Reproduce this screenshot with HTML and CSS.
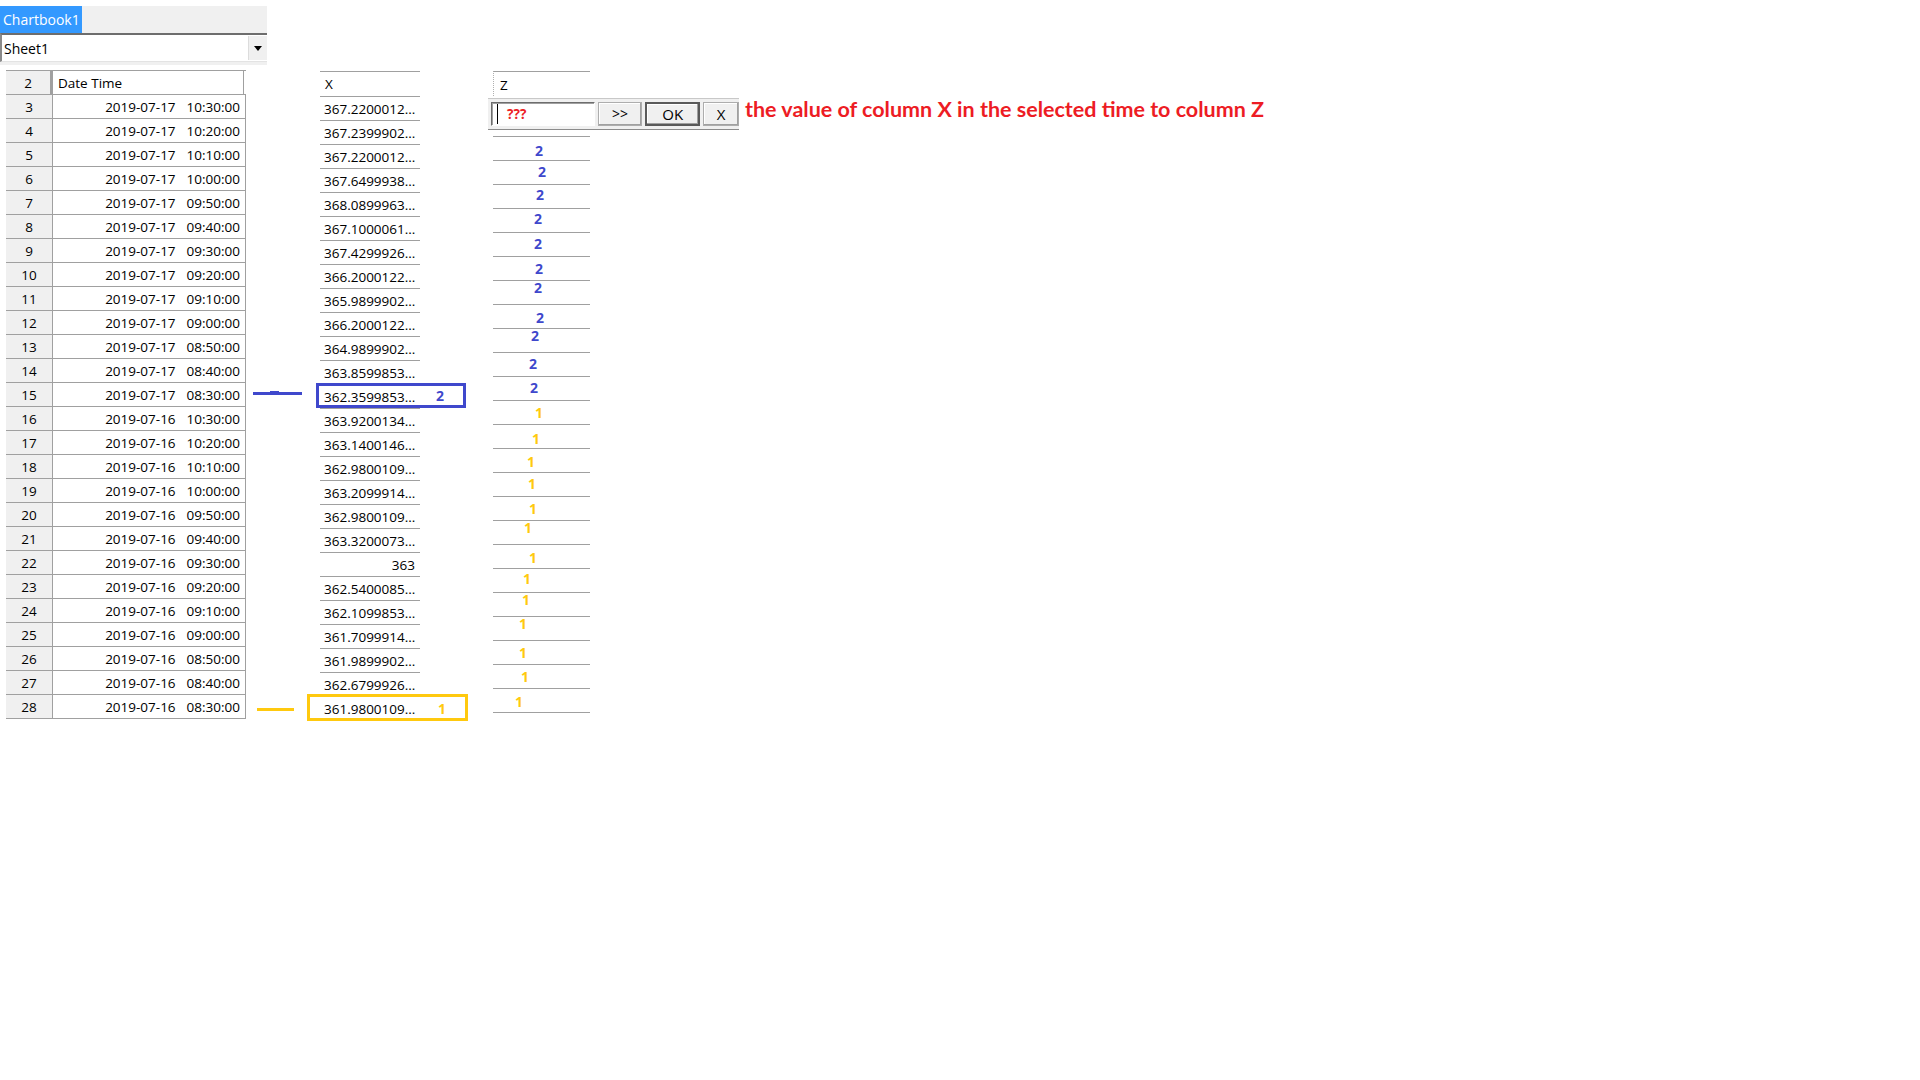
FILE: index.html
```html
<!DOCTYPE html>
<html lang="en">
    <head>
        <meta charset="UTF-8" />
        <title>Chartbook1</title>
        <link rel="stylesheet" href="styles.css">
    </head>

    <body>
        <div class="top">
            <div class="tabs"><div class="tab">Chartbook1</div></div>
            <div class="sheet-select">
                <span>Sheet1</span>
                <div class="drop"><div class="arrow"></div></div>
            </div>
            <div class="strip"></div>
        </div>

        <div class="sheet">
            <div class="grid">
                <div class="row head"><div class="rn">2</div><div class="dt left">Date Time</div></div>
                <div class="row"><div class="rn">3</div><div class="dt">2019-07-17  10:30:00</div></div>
                <div class="row"><div class="rn">4</div><div class="dt">2019-07-17  10:20:00</div></div>
                <div class="row"><div class="rn">5</div><div class="dt">2019-07-17  10:10:00</div></div>
                <div class="row"><div class="rn">6</div><div class="dt">2019-07-17  10:00:00</div></div>
                <div class="row"><div class="rn">7</div><div class="dt">2019-07-17  09:50:00</div></div>
                <div class="row"><div class="rn">8</div><div class="dt">2019-07-17  09:40:00</div></div>
                <div class="row"><div class="rn">9</div><div class="dt">2019-07-17  09:30:00</div></div>
                <div class="row"><div class="rn">10</div><div class="dt">2019-07-17  09:20:00</div></div>
                <div class="row"><div class="rn">11</div><div class="dt">2019-07-17  09:10:00</div></div>
                <div class="row"><div class="rn">12</div><div class="dt">2019-07-17  09:00:00</div></div>
                <div class="row"><div class="rn">13</div><div class="dt">2019-07-17  08:50:00</div></div>
                <div class="row"><div class="rn">14</div><div class="dt">2019-07-17  08:40:00</div></div>
                <div class="row"><div class="rn">15</div><div class="dt">2019-07-17  08:30:00</div></div>
                <div class="row"><div class="rn">16</div><div class="dt">2019-07-16  10:30:00</div></div>
                <div class="row"><div class="rn">17</div><div class="dt">2019-07-16  10:20:00</div></div>
                <div class="row"><div class="rn">18</div><div class="dt">2019-07-16  10:10:00</div></div>
                <div class="row"><div class="rn">19</div><div class="dt">2019-07-16  10:00:00</div></div>
                <div class="row"><div class="rn">20</div><div class="dt">2019-07-16  09:50:00</div></div>
                <div class="row"><div class="rn">21</div><div class="dt">2019-07-16  09:40:00</div></div>
                <div class="row"><div class="rn">22</div><div class="dt">2019-07-16  09:30:00</div></div>
                <div class="row"><div class="rn">23</div><div class="dt">2019-07-16  09:20:00</div></div>
                <div class="row"><div class="rn">24</div><div class="dt">2019-07-16  09:10:00</div></div>
                <div class="row"><div class="rn">25</div><div class="dt">2019-07-16  09:00:00</div></div>
                <div class="row"><div class="rn">26</div><div class="dt">2019-07-16  08:50:00</div></div>
                <div class="row"><div class="rn">27</div><div class="dt">2019-07-16  08:40:00</div></div>
                <div class="row"><div class="rn">28</div><div class="dt">2019-07-16  08:30:00</div></div>
            </div>

            <div class="xcol">
                <div class="xhead">X</div>
                <div class="xcell">367.2200012...</div>
                <div class="xcell">367.2399902...</div>
                <div class="xcell">367.2200012...</div>
                <div class="xcell">367.6499938...</div>
                <div class="xcell">368.0899963...</div>
                <div class="xcell">367.1000061...</div>
                <div class="xcell">367.4299926...</div>
                <div class="xcell">366.2000122...</div>
                <div class="xcell">365.9899902...</div>
                <div class="xcell">366.2000122...</div>
                <div class="xcell">364.9899902...</div>
                <div class="xcell">363.8599853...</div>
                <div class="xcell">362.3599853...</div>
                <div class="xcell">363.9200134...</div>
                <div class="xcell">363.1400146...</div>
                <div class="xcell">362.9800109...</div>
                <div class="xcell">363.2099914...</div>
                <div class="xcell">362.9800109...</div>
                <div class="xcell">363.3200073...</div>
                <div class="xcell num">363</div>
                <div class="xcell">362.5400085...</div>
                <div class="xcell">362.1099853...</div>
                <div class="xcell">361.7099914...</div>
                <div class="xcell">361.9899902...</div>
                <div class="xcell">362.6799926...</div>
                <div class="xcell">361.9800109...</div>
            </div>

            <div class="zcol">
                <div class="zhead">Z</div>
                <div class="prompt-row">
                    <div class="prompt">
                        <div class="input"><span class="caret"></span>???</div>
                        <div class="btn">&gt;&gt;</div>
                        <div class="btn ok">OK</div>
                        <div class="btn close">X</div>
                    </div>
                    <div class="note">the value of column X in the selected time to column Z</div>
                </div>
                <!-- hand-written marks, each one placed where it was drawn -->
                <div class="zcells">
                    <div class="zcell two" style="padding:7px 0 0 42px">2</div>
                    <div class="zcell two" style="padding:4px 0 0 45px">2</div>
                    <div class="zcell two" style="padding:3px 0 0 43px">2</div>
                    <div class="zcell two" style="padding:3px 0 0 41px">2</div>
                    <div class="zcell two" style="padding:4px 0 0 41px">2</div>
                    <div class="zcell two" style="padding:5px 0 0 42px">2</div>
                    <div class="zcell two" style="padding:0 0 0 41px">2</div>
                    <div class="zcell two" style="padding:6px 0 0 43px">2</div>
                    <div class="zcell two" style="padding:0 0 0 38px">2</div>
                    <div class="zcell two" style="padding:4px 0 0 36px">2</div>
                    <div class="zcell two" style="padding:4px 0 0 37px">2</div>
                    <div class="zcell one" style="padding:5px 0 0 42px">1</div>
                    <div class="zcell one" style="padding:7px 0 0 39px">1</div>
                    <div class="zcell one" style="padding:6px 0 0 34px">1</div>
                    <div class="zcell one" style="padding:4px 0 0 35px">1</div>
                    <div class="zcell one" style="padding:5px 0 0 36px">1</div>
                    <div class="zcell one" style="padding:0 0 0 31px">1</div>
                    <div class="zcell one" style="padding:6px 0 0 36px">1</div>
                    <div class="zcell one" style="padding:3px 0 0 30px">1</div>
                    <div class="zcell one" style="padding:0 0 0 29px">1</div>
                    <div class="zcell one" style="padding:0 0 0 26px">1</div>
                    <div class="zcell one" style="padding:5px 0 0 26px">1</div>
                    <div class="zcell one" style="padding:5px 0 0 28px">1</div>
                    <div class="zcell one" style="padding:6px 0 0 22px">1</div>
                </div>
            </div>

            <div class="mark blue-line"></div>
            <div class="mark blue-dot"></div>
            <div class="mark blue-box"><span>2</span></div>
            <div class="mark gold-line"></div>
            <div class="mark gold-box"><span>1</span></div>
        </div>
    </body>
</html>
```

FILE: styles.css
```css
@charset "utf-8";

* {
    margin: 0;
    padding: 0;
    box-sizing: border-box;
}

body {
    font-family: "Open Sans", "Noto Sans", sans-serif;
    font-size: 13.5px;
    color: #000;
    background: #fff;
    padding-top: 6px;
}

/* workbook header */
.top {
    width: 267px;
}

.tabs {
    height: 27px;
    background: #f0f0f0;
}

.tab {
    width: 82px;
    height: 27px;
    background: #3399ff;
    color: #fff;
    font-size: 14px;
    line-height: 27px;
    padding-left: 3px;
}

.sheet-select {
    display: flex;
    align-items: center;
    justify-content: space-between;
    height: 29px;
    border-top: 2px solid #6d6d6d;
    border-left: 2px solid #8a8a8a;
    border-bottom: 1px solid #e3e3e3;
    font-size: 14px;
    padding-left: 2px;
}

.drop {
    width: 19px;
    height: 24px;
    background: #f0f0f0;
    border-left: 1px solid #dcdcdc;
    display: flex;
    align-items: center;
    justify-content: center;
}

.arrow {
    width: 0;
    height: 0;
    border-left: 4px solid transparent;
    border-right: 4px solid transparent;
    border-top: 5px solid #000;
}

.strip {
    height: 3px;
    background: #f0f0f0;
}

/* sheet */
.sheet {
    position: relative;
    display: flex;
    align-items: flex-start;
}

.grid {
    margin: 5px 0 0 6px;
    border-top: 1px solid #a0a0a0;
}

.row {
    display: flex;
    height: 24px;
    border-bottom: 1px solid #a0a0a0;
}

.rn {
    width: 47px;
    background: #f0f0f0;
    border-right: 1px solid #a0a0a0;
    text-align: center;
    line-height: 24px;
}

.head .rn {
    border-right: 3px solid #a0a0a0;
}

.dt {
    width: 193px;
    border-right: 1px solid #a0a0a0;
    text-align: right;
    white-space: pre;
    word-spacing: 2px;
    line-height: 24px;
    padding-right: 5px;
}

.dt.left {
    text-align: left;
    width: 191px;
    padding-left: 5px;
    word-spacing: 0;
}

.xcol {
    width: 100px;
    margin: 6px 0 0 74px;
}

.xhead {
    height: 26px;
    border-top: 1px solid #a0a0a0;
    border-bottom: 1px solid #a0a0a0;
    line-height: 25px;
    padding-left: 5px;
}

.xcell {
    height: 24px;
    border-bottom: 1px solid #a0a0a0;
    line-height: 24px;
    padding-left: 4px;
    white-space: nowrap;
}

.xcell.num {
    text-align: right;
    padding-right: 5px;
}

.zcol {
    width: 97px;
    margin: 6px 0 0 73px;
}

.zhead {
    height: 25px;
    border-top: 1px solid #a0a0a0;
    border-left: 1px dotted #b0b0b0;
    line-height: 26px;
    padding-left: 6px;
}

.prompt-row {
    display: flex;
    align-items: flex-start;
    gap: 6px;
    height: 40px;
    margin-left: -5px;
    padding-top: 2px;
    white-space: nowrap;
    width: max-content;
}

.prompt {
    display: flex;
    align-items: center;
    gap: 3px;
    width: 251px;
    height: 32px;
    background: #f0f0f0;
    border-top: 1px solid #c8c8c8;
    border-bottom: 1px solid #8c8c8c;
    padding-left: 3px;
}

.input {
    display: flex;
    align-items: center;
    width: 104px;
    height: 24px;
    background: #fff;
    border-top: 1px solid #6d6d6d;
    border-left: 1px solid #6d6d6d;
    border-right: 1px solid #fff;
    border-bottom: 1px solid #fff;
    box-shadow: inset 1px 1px 0 #a0a0a0;
    color: #ed1c24;
    font-weight: 700;
    font-size: 13.5px;
    padding-left: 5px;
}

.caret {
    width: 1px;
    height: 20px;
    background: #000;
    margin-right: 9px;
}

.btn {
    width: 45px;
    height: 24px;
    background: #f0f0f0;
    border: 1px solid #adadad;
    box-shadow: inset -1px -1px 0 #a0a0a0, inset 1px 1px 0 #fff;
    text-align: center;
    line-height: 22px;
    font-size: 14px;
}

.btn.ok {
    width: 55px;
    border: 2px solid #5a5a5a;
    line-height: 20px;
    font-size: 15px;
}

.btn.close {
    width: 36px;
    font-size: 15px;
}

.note {
    font-family: Lato, "Liberation Sans", sans-serif;
    font-weight: 700;
    font-size: 21.5px;
    color: #ed1c24;
    line-height: 22px;
}

.zcells {
    border-top: 1px solid #a0a0a0;
}

.zcell {
    height: 24px;
    border-bottom: 1px solid #a0a0a0;
    font-size: 14px;
    line-height: 14px;
    font-weight: 700;
}

.two {
    color: #3f48cc;
}

.one {
    color: #ffc90e;
}

/* pen marks drawn on top of the sheet */
.mark {
    position: absolute;
}

.blue-line {
    left: 253px;
    top: 327px;
    width: 49px;
    height: 3px;
    background: #3f48cc;
}

.blue-dot {
    left: 270px;
    top: 326px;
    width: 9px;
    height: 4px;
    background: #3f48cc;
}

.blue-box {
    left: 316px;
    top: 318px;
    width: 150px;
    height: 25px;
    border: 3px solid #3f48cc;
}

.gold-line {
    left: 257px;
    top: 643px;
    width: 37px;
    height: 3px;
    background: #ffc90e;
}

.gold-box {
    left: 307px;
    top: 629px;
    width: 161px;
    height: 27px;
    border: 3px solid #ffc90e;
}

.blue-box span,
.gold-box span {
    position: absolute;
    font-size: 14px;
    font-weight: 700;
    line-height: 14px;
}

.blue-box span {
    left: 117px;
    top: 3px;
    color: #3f48cc;
}

.gold-box span {
    left: 128px;
    top: 5px;
    color: #ffc90e;
}
```
